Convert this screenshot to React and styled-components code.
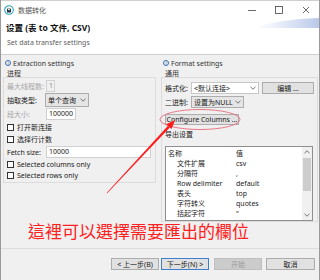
import React from 'react';
import styled, { createGlobalStyle } from 'styled-components';

const Global = createGlobalStyle`
  html, body { margin: 0; padding: 0; background: #fff; }
  body { font-family: "Noto Sans", "Noto Sans CJK SC", sans-serif; font-size: 7px; color: #1a1a1a; }
  * { box-sizing: border-box; }
`;

const Window = styled.div`
  position: relative;
  width: 320px;
  height: 280px;
  display: flex;
  flex-direction: column;
  background: #f0f0f0;
  border-left: 1px solid #9a9a9a;
  border-right: 1px solid #9a9a9a;
  overflow: hidden;
`;

const TitleBar = styled.div`
  height: 18px;
  display: flex;
  align-items: center;
  padding: 0 0 0 3px;
  background: #fff;
  border-top: 1px solid #cfcfcf;
`;

const TitleText = styled.span`
  margin-left: 4px;
  font-size: 7px;
  color: #555;
`;

const Controls = styled.div`
  margin-left: auto;
  display: flex;
  height: 100%;
`;

const Ctl = styled.div`
  width: 27px;
  display: flex;
  align-items: center;
  justify-content: center;
`;

const Header = styled.div`
  position: relative;
  height: 37px;
  background: #fff;
  border-bottom: 1px solid #cfcfcf;
  padding: 4px 5px 0;
`;

const Heading = styled.div`
  font-family: "Noto Sans", "Noto Sans CJK SC", sans-serif;
  font-size: 8.5px;
  font-weight: 700;
  line-height: 12px;
  color: #111;
`;

const SubHeading = styled.div`
  margin-top: 4px;
  padding-left: 1px;
  font-size: 7px;
  line-height: 10px;
  color: #606060;
`;

const Swoosh = styled.svg`
  position: absolute;
  right: 0;
  top: 0;
`;

const Body = styled.div`
  height: 193px;
  display: flex;
  gap: 5px;
  padding: 0 1px 0 2px;
`;

const Column = styled.div`
  width: ${(p) => p.w}px;
  display: flex;
  flex-direction: column;
`;

const SectionTitle = styled.div`
  height: 15px;
  display: flex;
  align-items: center;
  gap: 2px;
  padding: 1px 0 0 2px;
  color: #333;
`;

const Info = styled.span`
  width: 6px;
  height: 6px;
  border: 0.8px solid #3a6fb0;
  border-radius: 50%;
  font-size: 4.5px;
  line-height: 5px;
  text-align: center;
  color: #3a6fb0;
`;

const GroupLabel = styled.div`
  height: 7px;
  line-height: 7px;
  padding-left: 4px;
  color: #333;
`;

const Group = styled.div`
  border: 1px solid #dcdcdc;
  padding: 1px 3px 0;
  height: ${(p) => p.h}px;
  display: flex;
  flex-direction: column;
`;

const Row = styled.div`
  height: ${(p) => p.h || 14}px;
  display: flex;
  align-items: center;
  margin-top: ${(p) => p.mt || 0}px;
`;

const Label = styled.span`
  width: ${(p) => p.w}px;
  flex: none;
  color: ${(p) => (p.disabled ? '#a6a6a6' : '#1a1a1a')};
`;

const Input = styled.div`
  width: ${(p) => p.w}px;
  height: 12px;
  border: 1px solid #d0d0d0;
  background: ${(p) => (p.disabled ? '#f0f0f0' : '#fff')};
  color: ${(p) => (p.disabled ? '#8a8a8a' : '#1a1a1a')};
  padding-left: 2px;
  line-height: 10px;
`;

const Select = styled.div`
  width: ${(p) => p.w}px;
  height: ${(p) => p.h || 12}px;
  border: 1px solid ${(p) => (p.plain ? '#c8c8c8' : '#adadad')};
  background: ${(p) => (p.plain ? '#fff' : '#e5e5e5')};
  display: flex;
  align-items: center;
  padding: 0 2px;
  justify-content: space-between;
`;

const Button = styled.div`
  width: ${(p) => p.w}px;
  height: ${(p) => p.h || 12}px;
  border: 1px solid ${(p) => (p.focus ? '#3c7fd3' : p.disabled ? '#bfbfbf' : '#adadad')};
  background: ${(p) => (p.disabled ? '#cccccc' : '#e1e1e1')};
  color: ${(p) => (p.disabled ? '#9a9a9a' : '#1a1a1a')};
  display: flex;
  align-items: center;
  justify-content: center;
  flex: none;
`;

const Check = styled.span`
  width: 7px;
  height: 7px;
  border: 1px solid #333;
  background: #fff;
  margin-right: 3px;
  flex: none;
`;

const Table = styled.div`
  margin-top: 4px;
  width: 148px;
  height: 76px;
  border: 1px solid #8f8f8f;
  background: #fff;
  display: flex;
  overflow: hidden;
`;

const Cells = styled.div`
  flex: 1;
  display: flex;
  flex-direction: column;
  padding-top: 1px;
  overflow: hidden;
`;

const TRow = styled.div`
  height: 10px;
  flex: none;
  display: grid;
  grid-template-columns: ${(p) => (p.head ? '68px 1fr' : '59px 1fr')};
  padding-left: ${(p) => (p.head ? 2 : 11)}px;
  align-items: center;
  color: #222;
`;

const ScrollBar = styled.div`
  width: 10px;
  background: #f0f0f0;
  display: flex;
  flex-direction: column;
  align-items: center;
`;

const Thumb = styled.div`
  width: 8px;
  height: 33px;
  background: #cdcdcd;
  margin-top: 1px;
`;

const Arrowbox = styled.div`
  height: 10px;
  display: flex;
  align-items: center;
  justify-content: center;
  margin-top: ${(p) => (p.down ? 'auto' : 0)};
`;

const Footer = styled.div`
  flex: 1;
  border-top: 1px solid #dcdcdc;
  display: flex;
  align-items: flex-start;
  padding: 9px 4px 0 0;
  justify-content: flex-end;
`;

const ButtonRow = styled.div`
  display: flex;
  gap: ${(p) => p.gap}px;
`;

const Note = styled.div`
  position: absolute;
  left: 27px;
  top: 221px;
  font-family: "Noto Sans CJK TC", sans-serif;
  font-size: 17px;
  line-height: 19px;
  color: #ff2020;
  white-space: nowrap;
`;

const Overlay = styled.svg`
  position: absolute;
  left: -1px;
  top: 0;
  pointer-events: none;
`;

const Chevron = ({ dir = 'down' }) => (
  <svg width="6" height="4" viewBox="0 0 6 4">
    <path d={dir === 'down' ? 'M0.5 0.8 L3 3.2 L5.5 0.8' : 'M0.5 3.2 L3 0.8 L5.5 3.2'} fill="none" stroke="#555" strokeWidth="0.8" />
  </svg>
);

const rows = [
  ['文件扩展', 'csv'],
  ['分隔符', ','],
  ['Row delimiter', 'default'],
  ['表头', 'top'],
  ['字符转义', 'quotes'],
  ['括起字符', '"'],
  ['Quote always', 'disabled'],
];

export default function App() {
  return (
    <>
      <Global />
      <Window>
        <TitleBar>
          <svg width="10" height="10" viewBox="0 0 10 10">
            <circle cx="5" cy="5" r="4.3" fill="#fff" stroke="#2aa0b8" strokeWidth="1.1" />
            <path d="M3 7.5 L3 4 Q5 2 7 4 L7 7.5 Z" fill="#1d3a4a" />
            <circle cx="5" cy="4.2" r="1" fill="#fff" />
          </svg>
          <TitleText>数据转化</TitleText>
          <Controls>
            <Ctl>
              <svg width="8" height="8"><path d="M0 4.5 H8" stroke="#444" strokeWidth="0.8" /></svg>
            </Ctl>
            <Ctl>
              <svg width="8" height="8"><rect x="0.5" y="0.5" width="7" height="7" fill="none" stroke="#444" strokeWidth="0.8" /></svg>
            </Ctl>
            <Ctl>
              <svg width="8" height="8"><path d="M1 1 L7 7 M7 1 L1 7" stroke="#444" strokeWidth="0.8" /></svg>
            </Ctl>
          </Controls>
        </TitleBar>

        <Header>
          <Swoosh width="70" height="14" viewBox="0 0 70 14">
            <defs>
              <linearGradient id="sw" x1="0" x2="1" y1="0" y2="0">
                <stop offset="0" stopColor="#c9d5ef" stopOpacity="0" />
                <stop offset="1" stopColor="#b9c8ea" />
              </linearGradient>
            </defs>
            <path d="M5 10 Q30 1 70 0 L70 10 Z" fill="url(#sw)" />
          </Swoosh>
          <Heading>设置 (表 to 文件, CSV)</Heading>
          <SubHeading>Set data transfer settings</SubHeading>
        </Header>

        <Body>
          <Column w={154}>
            <SectionTitle><Info>i</Info>Extraction settings</SectionTitle>
            <GroupLabel>进程</GroupLabel>
            <Group h={106}>
              <Row>
                <Label w={39} disabled>最大线程数:</Label>
                <Input w={9} disabled>1</Input>
              </Row>
              <Row>
                <Label w={38}>抽取类型:</Label>
                <Select w={44} h={14}>单个查询<Chevron /></Select>
              </Row>
              <Row>
                <Label w={39} disabled>段大小:</Label>
                <Input w={30}>100000</Input>
              </Row>
              <Row h={12}><Check />打开新连接</Row>
              <Row h={12}><Check />选择行计数</Row>
              <Row>
                <Label w={39}>Fetch size:</Label>
                <Input w={105}>10000</Input>
              </Row>
              <Row h={11}><Check />Selected columns only</Row>
              <Row h={11}><Check />Selected rows only</Row>
            </Group>
          </Column>

          <Column w={157}>
            <SectionTitle><Info>i</Info>Format settings</SectionTitle>
            <GroupLabel>通用</GroupLabel>
            <Group h={145}>
              <Row mt={2}>
                <Label w={26}>格式化:</Label>
                <Select w={70} plain>&lt;默认连接&gt;<Chevron /></Select>
                <Button w={52} style={{ marginLeft: 3 }}>编辑 ...</Button>
              </Row>
              <Row>
                <Label w={26}>二进制:</Label>
                <Select w={53}>设置为NULL<Chevron /></Select>
              </Row>
              <Row mt={5} h={11}>
                <Button w={74} h={11}>Configure Columns ...</Button>
              </Row>
              <Row mt={2} h={16}>导出设置</Row>
              <Table>
                <Cells>
                  <TRow head><span>名称</span><span>值</span></TRow>
                  {rows.map(([k, v]) => (
                    <TRow key={k}><span>{k}</span><span>{v}</span></TRow>
                  ))}
                </Cells>
                <ScrollBar>
                  <Arrowbox><Chevron dir="up" /></Arrowbox>
                  <Thumb />
                  <Arrowbox down><Chevron /></Arrowbox>
                </ScrollBar>
              </Table>
            </Group>
          </Column>
        </Body>

        <Footer>
          <ButtonRow gap={2}>
            <Button w={48}>&lt; 上一步(B)</Button>
            <Button w={48} focus>下一步(N) &gt;</Button>
          </ButtonRow>
          <ButtonRow gap={4} style={{ marginLeft: 5 }}>
            <Button w={48} disabled>开始</Button>
            <Button w={49}>取消</Button>
          </ButtonRow>
        </Footer>

        <Note>這裡可以選擇需要匯出的欄位</Note>

        <Overlay width="320" height="280" viewBox="0 0 320 280">
          <ellipse cx="200" cy="119.5" rx="40" ry="10" fill="none" stroke="#e66a7a" strokeWidth="0.9" />
          <polygon points="107.2,193.2 106.8,192.8 168,125.8 169.8,127.4" fill="#ff1a1a" />
          <polygon points="175,120 171.5,129 166.3,124.2" fill="#ff1a1a" />
        </Overlay>
      </Window>
    </>
  );
}
